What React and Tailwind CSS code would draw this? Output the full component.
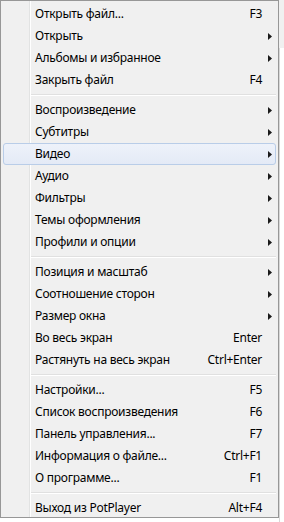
import React from "react";

const sections = [
  [
    { label: "Открыть файл...", key: "F3" },
    { label: "Открыть", sub: true },
    { label: "Альбомы и избранное", sub: true },
    { label: "Закрыть файл", key: "F4" },
  ],
  [
    { label: "Воспроизведение", sub: true },
    { label: "Субтитры", sub: true },
    { label: "Видео", sub: true, active: true },
    { label: "Аудио", sub: true },
    { label: "Фильтры", sub: true },
    { label: "Темы оформления", sub: true },
    { label: "Профили и опции", sub: true },
  ],
  [
    { label: "Позиция и масштаб", sub: true },
    { label: "Соотношение сторон", sub: true },
    { label: "Размер окна", sub: true },
    { label: "Во весь экран", key: "Enter" },
    { label: "Растянуть на весь экран", key: "Ctrl+Enter" },
  ],
  [
    { label: "Настройки...", key: "F5" },
    { label: "Список воспроизведения", key: "F6" },
    { label: "Панель управления...", key: "F7" },
    { label: "Информация о файле...", key: "Ctrl+F1" },
    { label: "О программе...", key: "F1" },
  ],
  [{ label: "Выход из PotPlayer", key: "Alt+F4" }],
];

const Arrow = () => (
  <svg width="4" height="7" viewBox="0 0 4 7" className="block">
    <path d="M0 0 L4 3.5 L0 7 Z" fill="#1a1a1a" />
  </svg>
);

const MenuItem = ({ item }) => (
  <div
    className={
      "relative flex items-center h-[22px] rounded-[3px] border " +
      (item.active
        ? "border-[#b9cde8] bg-gradient-to-b from-[#eef2fa] to-[#e4eaf6]"
        : "border-transparent")
    }
  >
    <span className="pl-[31px] flex-1 whitespace-nowrap">{item.label}</span>
    {item.key && <span className="pr-[13px] whitespace-nowrap">{item.key}</span>}
    {item.sub && (
      <span className="pr-[3px]">
        <Arrow />
      </span>
    )}
  </div>
);

const Separator = () => (
  <div className="h-[8px] flex flex-col justify-center pl-[28px]">
    <div className="h-px bg-[#e0e0e0]" />
    <div className="h-px bg-white" />
  </div>
);

export default function App() {
  return (
    <div className="w-[284px] h-[522px] bg-white flex font-['Noto_Sans','Open_Sans',sans-serif] text-[12px] tracking-[-0.25px] text-black">
      <div className="w-[279px] h-[518px] border border-[#979797] bg-[#f0f0f0] relative overflow-hidden">
        {/* left icon gutter */}
        <div className="absolute left-[28px] top-0 bottom-0 w-px bg-[#e2e3e3]" />
        <div className="absolute left-[29px] top-0 bottom-0 w-px bg-white" />
        <div className="relative px-[2px] pt-[2px]">
          {sections.map((items, i) => (
            <div key={i}>
              {i > 0 && <Separator />}
              {items.map((item, j) => (
                <MenuItem key={j} item={item} />
              ))}
            </div>
          ))}
        </div>
      </div>
      <div className="flex-1 flex flex-col">
        <div className="h-[48px] bg-[#f0f0f0]" />
        <div className="flex-1 border-l border-[#d8d8d8] bg-white" />
      </div>
    </div>
  );
}
